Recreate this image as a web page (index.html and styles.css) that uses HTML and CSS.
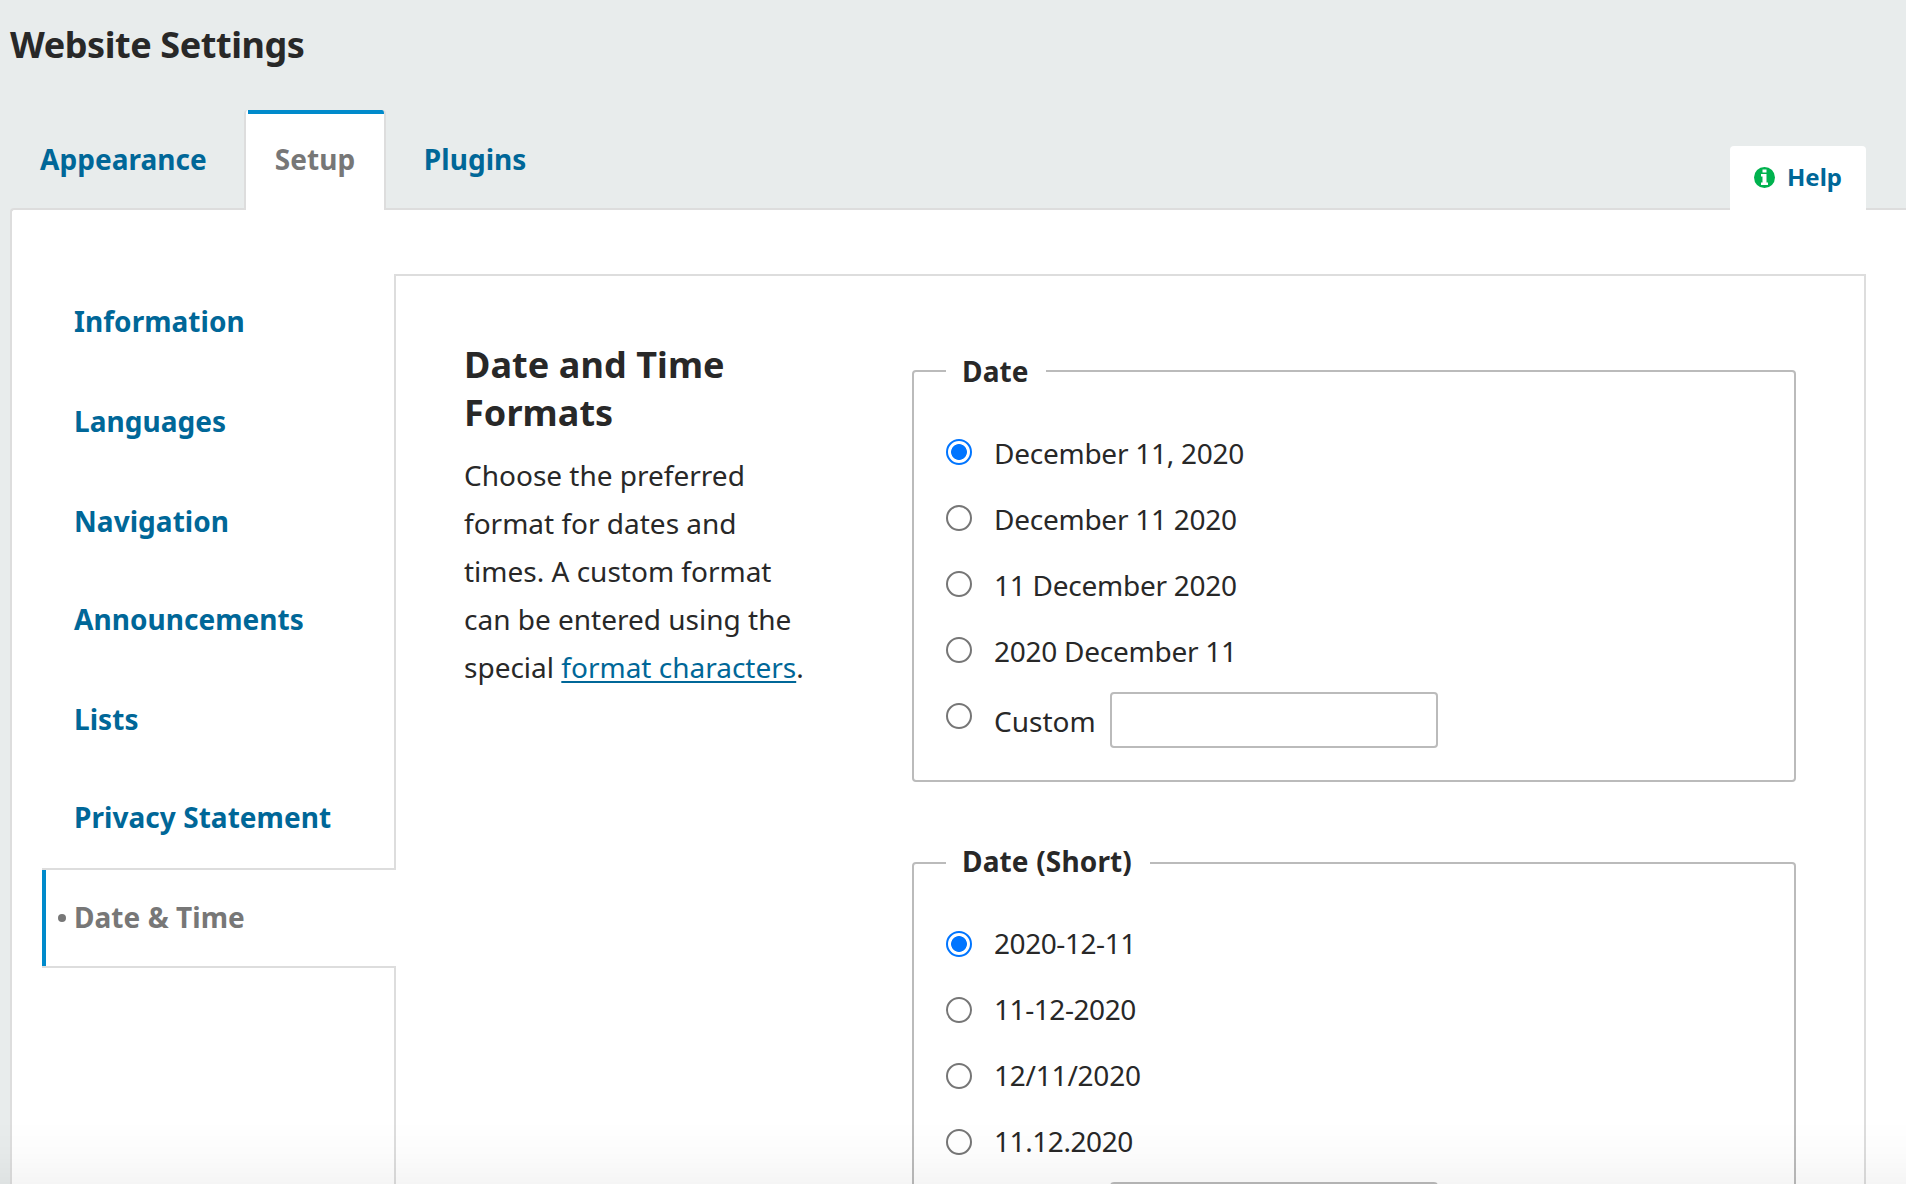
FILE: index.html
```html
<!DOCTYPE html>
<html lang="en">
<head>
<meta charset="utf-8">
<title>Website Settings</title>
<link rel="stylesheet" href="styles.css">
</head>
<body>
<h1 class="page-title">Website Settings</h1>
<div class="tabs">
  <nav class="tab-list">
    <a class="tab">Appearance</a>
    <a class="tab tab-active">Setup</a>
    <a class="tab">Plugins</a>
  </nav>
  <a class="help">
    <svg class="help-icon" viewBox="0 0 42 42"><circle cx="21" cy="21" r="21" fill="#00b24e"/><path fill="#fff" d="M17 5h8v6h-8zM14 14h11v17h3v5H14v-5h3V19h-3z"/></svg>
    <span>Help</span>
  </a>
</div>
<main class="panel">
  <nav class="side-nav">
    <a class="side-link">Information</a>
    <a class="side-link">Languages</a>
    <a class="side-link">Navigation</a>
    <a class="side-link">Announcements</a>
    <a class="side-link">Lists</a>
    <a class="side-link">Privacy Statement</a>
    <a class="side-link side-active">Date &amp; Time</a>
  </nav>
  <section class="content">
    <div class="intro">
      <h2 class="intro-title">Date and Time Formats</h2>
      <p class="intro-text">Choose the preferred format for dates and times. A custom format can be entered using the special <a class="link">format characters</a>.</p>
    </div>
    <form class="groups">
      <fieldset class="group">
        <legend class="legend">Date</legend>
        <label class="option"><input class="radio" type="radio" name="date" checked><span>December 11, 2020</span></label>
        <label class="option"><input class="radio" type="radio" name="date"><span>December 11 2020</span></label>
        <label class="option"><input class="radio" type="radio" name="date"><span>11 December 2020</span></label>
        <label class="option"><input class="radio" type="radio" name="date"><span>2020 December 11</span></label>
        <div class="option option-custom"><input class="radio" type="radio" name="date"><span class="custom-label">Custom</span><input class="custom-input" type="text"></div>
      </fieldset>
      <fieldset class="group group-short">
        <legend class="legend">Date (Short)</legend>
        <label class="option"><input class="radio" type="radio" name="short" checked><span>2020-12-11</span></label>
        <label class="option"><input class="radio" type="radio" name="short"><span>11-12-2020</span></label>
        <label class="option"><input class="radio" type="radio" name="short"><span class="slashed">12/11/2020</span></label>
        <label class="option"><input class="radio" type="radio" name="short"><span>11.12.2020</span></label>
        <div class="option option-custom"><input class="radio" type="radio" name="short"><span class="custom-label"></span><input class="custom-input" type="text"></div>
      </fieldset>
    </form>
  </section>
</main>
<div class="bottom-fade"></div>
</body>
</html>
```
FILE: styles.css
```css
* { box-sizing: border-box; }

body {
  margin: 0;
  height: 1184px;
  overflow: hidden;
  display: flex;
  flex-direction: column;
  background: #e8ecec;
  color: #282828;
  font: 28px/48px "Noto Sans", sans-serif;
}

.page-title {
  margin: 0;
  padding: 21px 0 0 10px;
  height: 110px;
  flex: none;
  font-size: 36px;
  line-height: 48px;
  letter-spacing: -0.42px;
}

/* Tabs */
.tabs {
  display: flex;
  justify-content: space-between;
  align-items: flex-end;
  flex: none;
  height: 100px;
  margin-bottom: -2px;
  padding: 0 40px 0 10px;
  position: relative;
}

.tab-list { display: flex; }

.tab {
  height: 100px;
  padding: 25px 30px 0;
  color: #006798;
  font-weight: 700;
  letter-spacing: 0.05px;
}

.tab-active {
  width: 142px;
  margin-left: 7px;
  margin-right: 8px;
  padding: 25px 0 0 29px;
  border: 2px solid #ddd;
  border-width: 0 2px;
  border-radius: 4px 4px 0 0;
  background: linear-gradient(#008acb, #008acb) 2px 0 / 100% 4px no-repeat #fff;
  color: #777;
}

.help {
  display: flex;
  align-items: center;
  gap: 12px;
  width: 136px;
  height: 64px;
  padding: 0 0 2px 24px;
  border-radius: 4px 4px 0 0;
  background: #fff;
  color: #006798;
  font-size: 24px;
  font-weight: 700;
}

.help-icon { width: 21px; height: 21px; }

/* Panel and side navigation */
.panel {
  display: flex;
  flex: 1;
  min-height: 0;
  overflow: hidden;
  margin-left: 10px;
  padding: 64px 0 0 30px;
  border: 2px solid #ddd;
  border-width: 2px 0 0 2px;
  border-top-left-radius: 4px;
  background: #fff;
}

.side-nav {
  display: flex;
  flex-direction: column;
  width: 354px;
  margin-right: -2px;
  position: relative;
}

.side-link {
  flex: none;
  height: 100px;
  padding: 23px 0 0 32px;
  color: #006798;
  font-weight: 700;
  letter-spacing: 0.05px;
}

.side-link:nth-child(3),
.side-link:nth-child(5) { height: 98px; }

.side-active {
  display: flex;
  margin-top: -2px;
  padding: 23px 0 0 10px;
  border: 2px solid #ddd;
  border-width: 2px 0;
  background: linear-gradient(#008acb, #008acb) 0 0 / 4px 100% no-repeat #fff;
  color: #777;
}

.side-active::before {
  content: "";
  width: 8px;
  height: 8px;
  margin: 21px 8px 0 6px;
  border-radius: 50%;
  background: #777;
}

/* Content */
.content {
  display: flex;
  width: 1472px;
  padding: 64px 68px 0;
  border: 2px solid #ddd;
  border-bottom: 0;
}

.intro { width: 448px; }

.intro-title {
  width: 340px;
  margin: 1px 0 14px;
  font-size: 36px;
  line-height: 48px;
  letter-spacing: 0.08px;
}

.intro-text { width: 348px; margin: 0; }

.link {
  color: #006798;
  text-decoration: underline;
  text-decoration-thickness: 2px;
  text-underline-offset: 3px;
}

.groups { width: 884px; padding-top: 7px; }

.group {
  margin: 0 0 55px;
  padding: 34px 32px 32px;
  border: 2px solid #bbb;
  border-radius: 4px;
  letter-spacing: -0.25px;
}

.legend {
  padding: 0 17px 0 16px;
  font-weight: 700;
  letter-spacing: 0.15px;
}

.group-short { padding-top: 30px; letter-spacing: -0.43px; }
.group-short .legend { padding: 0 18px 4px 16px; }
.group-short .radio { margin-top: 12px; }
.slashed { letter-spacing: -0.22px; }

.option {
  display: flex;
  align-items: flex-start;
  gap: 22px;
  height: 66px;
}

.option-custom { height: 55px; letter-spacing: 0; }

.radio {
  appearance: none;
  flex: none;
  width: 26px;
  height: 26px;
  margin: 10px 0 0;
  border: 2px solid #767676;
  border-radius: 50%;
  background: #fff;
}

.radio:checked {
  border-color: #0075ff;
  background: radial-gradient(circle, #0075ff 7.5px, #fff 8.3px);
}

.custom-label { width: 102px; margin-top: 4px; }

.custom-input {
  width: 328px;
  height: 56px;
  margin: -1px 0 0 -8px;
  border: 2px solid #bbb;
  border-radius: 4px;
  background: #fff;
}

/* Shade along the bottom edge of the window */
.bottom-fade {
  position: fixed;
  inset: auto 0 0;
  height: 64px;
  background: linear-gradient(rgba(0, 0, 0, 0), rgba(0, 0, 0, 0.01) 50%, rgba(0, 0, 0, 0.04));
  pointer-events: none;
}
```
